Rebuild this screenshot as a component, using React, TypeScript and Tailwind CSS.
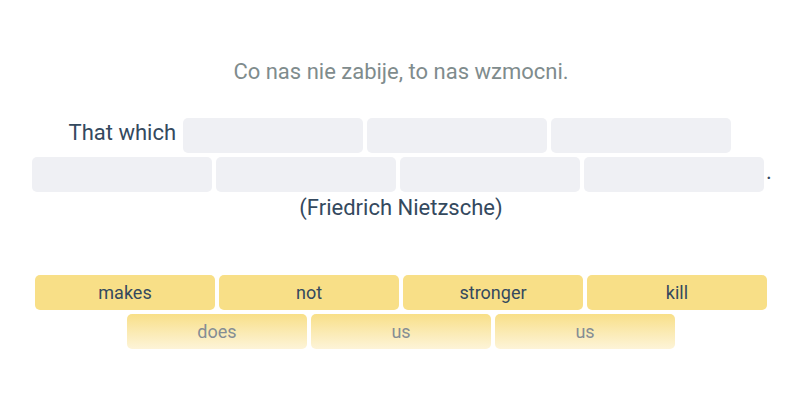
const blanks = 7;

const tiles = ["makes", "not", "stronger", "kill"];
const usedTiles = ["does", "us", "us"];

function Blank() {
  return (
    <span className="inline-block h-[35px] w-[180px] m-[2px] align-top rounded-[5px] bg-[#eff0f4]" />
  );
}

export default function App() {
  return (
    <main
      className="min-h-[400px] w-[800px] bg-white pl-[22px] pr-[20px] pt-[58px]"
      style={{ fontFamily: "Roboto, 'Liberation Sans', sans-serif" }}
    >
      <h1 className="text-center text-[22px] leading-[28px] text-[#7f8c8d]">
        Co nas nie zabije, to nas wzmocni.
      </h1>

      <p className="mt-[30px] text-center text-[22px] leading-[33px] text-[#34495e]">
        That which{" "}
        {Array.from({ length: blanks }).map((_, i) => (
          <Blank key={i} />
        ))}
        .
      </p>
      <p className="text-center text-[22px] leading-[28px] text-[#34495e]">
        (Friedrich Nietzsche)
      </p>

      <div className="mt-[53px] flex flex-wrap justify-center gap-1">
        {tiles.map((t) => (
          <div
            key={t}
            className="flex h-[35px] w-[180px] items-center justify-center rounded-[5px] bg-[#f8df87] text-[18px] text-[#34495e]"
          >
            {t}
          </div>
        ))}
        {usedTiles.map((t, i) => (
          <div
            key={i}
            className="flex h-[35px] w-[180px] items-center justify-center rounded-[5px] bg-gradient-to-b from-[#f8df87] to-[#fdf4d8] text-[18px] text-[#858d94]"
          >
            {t}
          </div>
        ))}
      </div>
    </main>
  );
}
